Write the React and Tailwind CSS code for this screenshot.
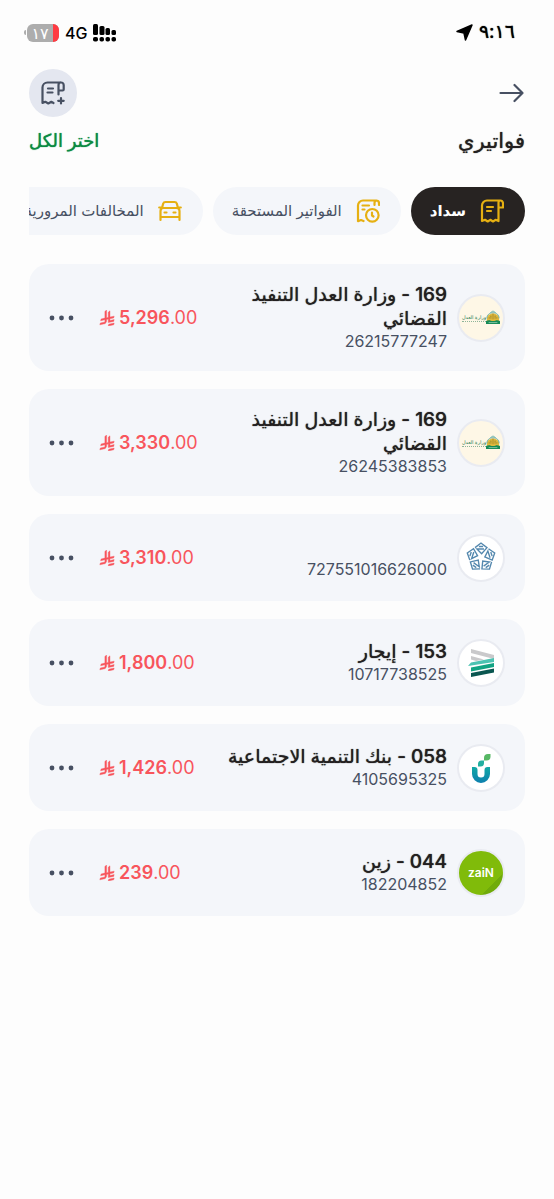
import clsx from "clsx";

const tabs = [
  { id: "sadad", label: "سداد", icon: BillIcon, active: true },
  { id: "due", label: "الفواتير المستحقة", icon: BillClockIcon },
  { id: "traffic", label: "المخالفات المرورية", icon: CarIcon },
];

const bills = [
  { id: 1, title: "169 - وزارة العدل التنفيذ القضائي", number: "26215777247", amount: "5,296", logo: JusticeLogo },
  { id: 2, title: "169 - وزارة العدل التنفيذ القضائي", number: "26245383853", amount: "3,330", logo: JusticeLogo },
  { id: 3, title: "", number: "727551016626000", amount: "3,310", logo: PentagonLogo },
  { id: 4, title: "153 - إيجار", number: "10717738525", amount: "1,800", logo: EjarLogo },
  { id: 5, title: "058 - بنك التنمية الاجتماعية", number: "4105695325", amount: "1,426", logo: BankLogo },
  { id: 6, title: "044 - زين", number: "182204852", amount: "239", logo: ZainLogo },
];

export default function App() {
  return (
    <div
      dir="rtl"
      className="min-h-screen bg-[#fdfdfd] px-[29px] font-['Inter','DejaVu_Sans',sans-serif] text-[#231f20]"
    >
      <StatusBar />

      <header>
        <div className="flex items-center justify-between">
          <button type="button" aria-label="رجوع" className="text-[#475062]">
            <ArrowIcon />
          </button>
          <button
            type="button"
            aria-label="إضافة فاتورة"
            className="flex size-12 items-center justify-center rounded-full bg-[#e4e7f0] text-[#475062]"
          >
            <BillAddIcon />
          </button>
        </div>
        <div className="mt-2 flex h-8 items-center justify-between">
          <h1 className="text-[21px] font-medium [text-shadow:0_0_1px_currentColor]">فواتيري</h1>
          <button type="button" className="text-lg font-medium text-[#0b8a42] [text-shadow:0_0_1px_currentColor]">
            اختر الكل
          </button>
        </div>
      </header>

      <nav className="mt-[30px] flex gap-[10px] overflow-x-auto [scrollbar-width:none]">
        {tabs.map((tab) => (
          <TabButton key={tab.id} {...tab} />
        ))}
      </nav>

      <main className="mt-[29px]">
        <ul className="flex flex-col gap-[18px]">
          {bills.map((bill) => (
            <BillCard key={bill.id} {...bill} />
          ))}
        </ul>
      </main>
    </div>
  );
}

function StatusBar() {
  return (
    <div className="flex h-[69px] items-center justify-between pr-[10px] pb-1 text-black">
      <div className="flex items-center gap-[6px]">
        <span className="text-[19px] [text-shadow:0_0_1px_currentColor]">٩:١٦</span>
        <LocationIcon />
      </div>
      <div className="-ml-[5px] flex items-center gap-[6px]">
        <SignalIcon />
        <span className="text-base font-medium">4G</span>
        <div className="flex items-center gap-px">
          <div className="flex h-[18px] w-8 overflow-hidden rounded-md bg-[#adadad]">
            <span className="w-[6px] bg-[#ff3b42]" />
            <span className="flex-1 text-center text-base leading-[18px] text-white">١٧</span>
          </div>
          <span className="h-[5px] w-[2px] rounded-l-full bg-[#adadad]" />
        </div>
      </div>
    </div>
  );
}

function TabButton({ label, icon: Icon, active }) {
  return (
    <button
      type="button"
      className={clsx(
        "flex h-12 shrink-0 items-center gap-[14px] rounded-full pr-[21px] pl-[19px] text-[15px] whitespace-nowrap",
        active ? "bg-[#272322] font-bold text-white" : "bg-[#f4f6fa] text-[#475062]"
      )}
    >
      <Icon />
      {label}
    </button>
  );
}

function BillCard({ title, number, amount, logo: Logo }) {
  return (
    <li className="flex min-h-[87px] items-center rounded-[20px] bg-[#f4f6fa] px-5 py-[19px]">
      <Logo />
      <div className="mr-[10px] flex-1">
        <h2 className="min-h-6 text-[19px] leading-6 font-medium [text-shadow:0_0_1px_currentColor]">{title}</h2>
        <p className="text-base leading-[21px] text-[#475062]">{number}</p>
      </div>
      <div dir="ltr" className="flex w-[120px] items-center gap-1 text-lg text-[#f8555c]">
        <RiyalIcon />
        <span>
          <span className="font-semibold">{amount}</span>.00
        </span>
      </div>
      <button type="button" aria-label="المزيد" className="mr-6 text-[#475062]">
        <DotsIcon />
      </button>
    </li>
  );
}

/* ---------- logos ---------- */

function LogoCircle({ className, children }) {
  return (
    <div
      className={clsx(
        "flex size-12 shrink-0 items-center justify-center overflow-hidden rounded-full border-2 border-[#e9ebf1]",
        className
      )}
    >
      {children}
    </div>
  );
}

function JusticeLogo() {
  return (
    <LogoCircle className="bg-[#fef7e6]">
      <svg width="14" height="15" viewBox="0 0 16 16" className="shrink-0">
        <path d="M1 10C1 6 4 3.500 8 3.500S15 6 15 10v2H1z" fill="#e0b83c" />
        <path d="M1 9c0-4 3-6.500 7-6.500S15 5 15 9M5 2.500 8 .5l3 2" fill="none" stroke="#3f9c9a" strokeWidth=".8" />
        <path d="M3 8.500h3.500M9.500 8.500H13M8 3.500V10M4.500 6.500h2M9.500 6.500h2" stroke="#a08a2c" />
        <path d="M0 12c4-2 5 0 8 0s4-2 8 0v3.500H0z" fill="#168a57" />
        <path d="M3 13.800h10" stroke="#a6d6bb" strokeWidth=".8" />
      </svg>
      <span className="flex flex-col">
        <span className="text-[5px] leading-[7px] whitespace-nowrap text-[#1f7a50]">وزارة العدل</span>
        <span className="border-t border-dotted border-[#8fb59a]" />
      </span>
    </LogoCircle>
  );
}

function PentagonLogo() {
  return (
    <LogoCircle className="bg-white">
      <svg width="32" height="32" viewBox="-15 -14.500 30 30" fill="none" stroke="#5488ae" strokeWidth="1.300">
        {[0, 72, 144, 216, 288].map((angle) => (
          <g key={angle} transform={`rotate(${angle})`}>
            <path d="M-5.600-9.200 0-13.500 5.600-9.200 .6-3.600-3.800-8H2.800" />
            <path d="M-2-10.300H2" />
          </g>
        ))}
      </svg>
    </LogoCircle>
  );
}

function EjarLogo() {
  return (
    <LogoCircle className="bg-white">
      <svg width="28" height="30" viewBox="0 0 28 30">
        <path d="M4 1l23 6v4L4 5z" fill="#c9c9cb" />
        <path d="M4 8l13 3.500-8 1.500-5-1.500z" fill="#c9c9cb" />
        <path d="M4 14.500 27 10v4L1 18z" fill="#4cc3b2" />
        <path d="M4 19.500 27 15v4L4 23.500z" fill="#12a383" />
        <path d="M4 25 27 20.500v4L4 29z" fill="#0a5650" />
      </svg>
    </LogoCircle>
  );
}

function BankLogo() {
  return (
    <LogoCircle className="bg-white">
      <svg width="20" height="32" viewBox="0 0 20 32">
        <defs>
          <linearGradient id="bank" x1="0" y1="0" x2="0" y2="1">
            <stop offset="0" stopColor="#12a9a6" />
            <stop offset="1" stopColor="#0d7fae" />
          </linearGradient>
        </defs>
        <path d="M1 15h2.500q3 0 3 3v4a3.500 3.500 0 0 0 7 0v-4q0-3 3-3H19v7a9 9 0 0 1-18 0z" fill="url(#bank)" />
        <path d="M7 14.500V12q0-3.500 3.500-3.500H13V11q0 3.500-3.500 3.500z" fill="#21afa0" />
        <path d="M13 8.500V6q0-4 4-4h2.500v2.500q0 4-4 4z" fill="#57b865" />
      </svg>
    </LogoCircle>
  );
}

function ZainLogo() {
  return (
    <LogoCircle className="bg-[linear-gradient(135deg,#80bb0a_0%,#80bb0a_76%,#70ab0a_76%)] text-white">
      <span dir="ltr" className="text-xs font-semibold">
        zaiN
      </span>
    </LogoCircle>
  );
}

/* ---------- icons ---------- */

function BillIcon() {
  return (
    <svg width="24" height="24" viewBox="0 0 24 24" fill="none" stroke="#e6b012" strokeWidth="2.200" strokeLinecap="round" strokeLinejoin="round">
      <path d="M20.500 1.500H7a5 5 0 0 0-5 5V22l3-1.200 2.700 1.700 2.600-1.700 2.700 1.700 2.500-1.700L18.500 22V3.500q0-2 2-2T23 4v4.500h-4.500" />
      <path d="M7 8h6M7 12h4" />
    </svg>
  );
}

function BillClockIcon() {
  return (
    <svg width="24" height="24" viewBox="0 0 24 24" fill="none" stroke="#e6b012" strokeWidth="2.200" strokeLinecap="round" strokeLinejoin="round">
      <path d="M7.500 22 5 21l-3 1.200V6.500a5 5 0 0 1 5-5h13.500q2.500 0 2.500 3V6M18.500 6V4q0-2 2-2.500" />
      <path d="M6.500 6.500h6.500M6.500 10.500h2" />
      <circle cx="16.300" cy="16.300" r="6.300" />
      <path d="M16 13.500v3l1.500 1" />
    </svg>
  );
}

function CarIcon() {
  return (
    <svg width="24" height="24" viewBox="0 0 24 24" fill="none" stroke="#e6b012" strokeWidth="2.200" strokeLinecap="round" strokeLinejoin="round">
      <path d="M4 9l1.200-4.500Q5.700 3 7.500 3h9q1.800 0 2.300 1.500L20 9M4.500 9h15" />
      <path d="M2.500 21v-9q0-3 3-3M21.500 21v-9q0-3-3-3M2.500 18h19M1.200 8.500H3M21 8.500h1.800" />
      <path d="M6.500 13.500h2M15.500 13.500h2" />
    </svg>
  );
}

function BillAddIcon() {
  return (
    <svg width="24" height="24" viewBox="0 0 24 24" fill="none" stroke="currentColor" strokeWidth="2.200" strokeLinecap="round" strokeLinejoin="round">
      <path d="M19.500 1.500H6.500a5 5 0 0 0-5 5V22l2.800-1.200 3 1.700 3-1.700 2.200 1.200M17.500 13.500V4q0-2.500 2.500-2.500T22.700 4v4.500q0 1-1 1h-4.200" />
      <path d="M7 7.500h5M6.500 11.500h5M20 17v5.500M17.200 19.800h5.500" />
    </svg>
  );
}

function ArrowIcon() {
  return (
    <svg width="26" height="20" viewBox="0 0 26 20" fill="none" stroke="currentColor" strokeWidth="2.200" strokeLinecap="round" strokeLinejoin="round">
      <path d="M1.500 10h22M15.500 2l8 8-8 8" />
    </svg>
  );
}

function DotsIcon() {
  return (
    <svg width="26" height="6" viewBox="0 0 26 6" fill="currentColor">
      <circle cx="3" cy="3" r="2.400" />
      <circle cx="12.500" cy="3" r="2.400" />
      <circle cx="22" cy="3" r="2.400" />
    </svg>
  );
}

function LocationIcon() {
  return (
    <svg width="17" height="17" viewBox="0 0 17 17">
      <path d="M16 1 9.500 16 8 9 1 7.500z" fill="#000" stroke="#000" strokeWidth="1.500" strokeLinejoin="round" />
    </svg>
  );
}

function SignalIcon() {
  return (
    <svg width="24" height="18" viewBox="0 0 24 18" fill="#000">
      <rect x="0" y="0" width="5" height="11" rx="1.500" />
      <rect x="6.500" y="2" width="5" height="9" rx="1.500" />
      <rect x="12.500" y="4" width="4.500" height="7" rx="1.500" />
      <rect x="18.500" y="6" width="4.500" height="5" rx="1.500" />
      <rect x="0" y="13" width="5" height="4.500" rx="1.800" />
      <rect x="6.500" y="13" width="4.500" height="4.500" rx="1.800" />
      <rect x="12.500" y="13" width="4.500" height="4.500" rx="1.800" />
      <rect x="18.500" y="13" width="4.500" height="4.500" rx="1.800" />
    </svg>
  );
}

function RiyalIcon() {
  return (
    <svg width="16" height="16" viewBox="0 0 1124 1256" fill="currentColor" stroke="currentColor" strokeWidth="30">
      <path d="M699.620 1113.020c-20.060 44.480-33.320 92.750-38.400 143.370l424.510-90.240c20.060-44.470 33.310-92.750 38.400-143.370z" />
      <path d="M1085.730 895.800c20.060-44.470 33.320-92.750 38.400-143.370l-330.680 70.330v-135.200l292.270-62.110c20.060-44.470 33.320-92.750 38.400-143.370l-330.680 70.270V66.130c-50.670 28.450-95.670 66.320-132.250 110.990v403.350l-132.250 28.110V0c-50.670 28.440-95.670 66.320-132.250 110.990v525.690l-295.910 62.880c-20.060 44.470-33.330 92.750-38.420 143.370l334.330-71.050v170.260l-358.300 76.140c-20.060 44.470-33.320 92.750-38.400 143.370l375.040-79.700c30.530-6.350 56.770-24.400 73.830-49.240l68.780-101.970c7.140-10.550 11.300-23.270 11.300-36.970v-149.980l132.250-28.110v270.400z" />
    </svg>
  );
}
